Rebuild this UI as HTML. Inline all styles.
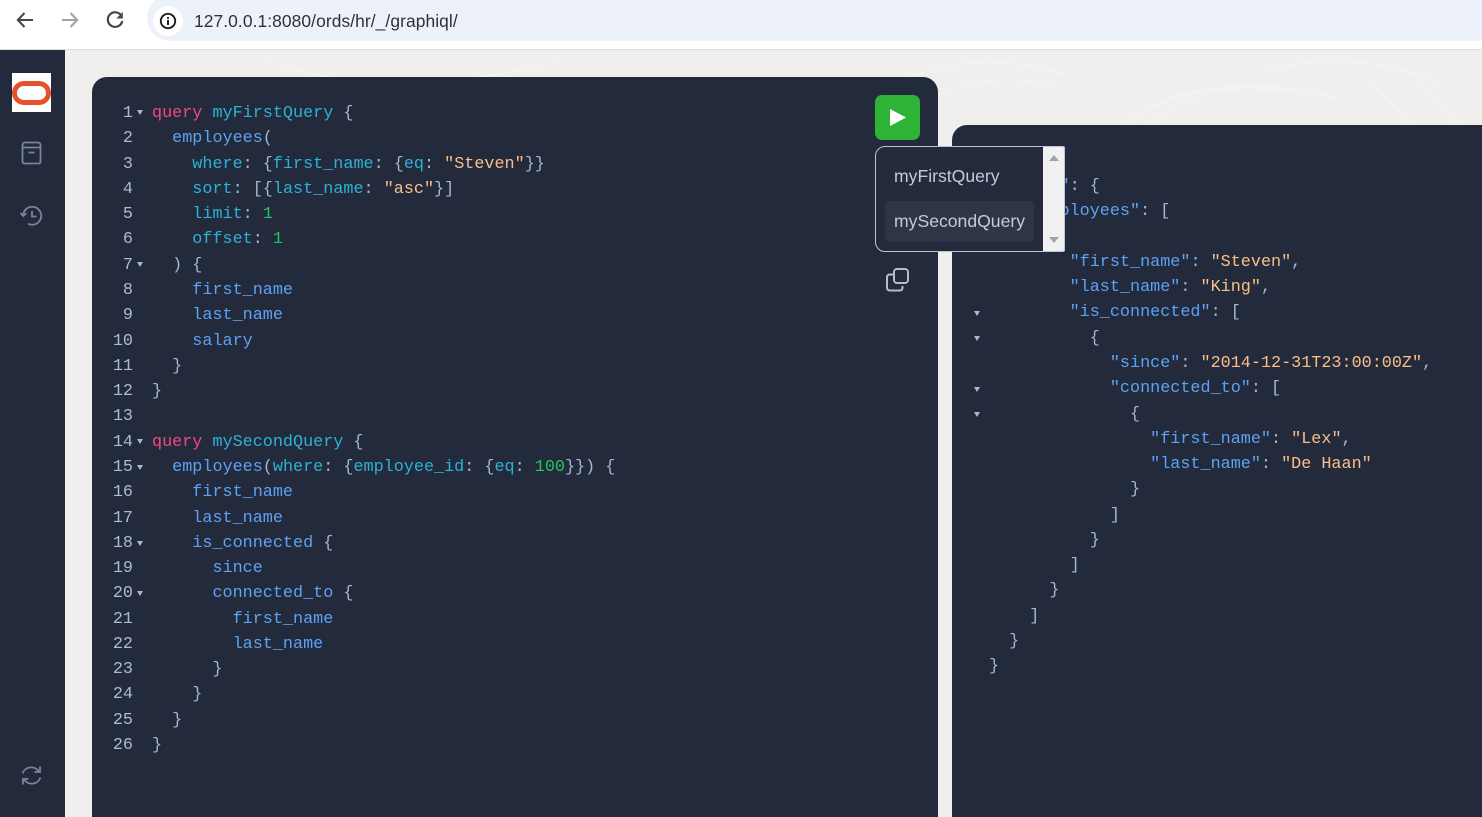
<!DOCTYPE html>
<html><head><meta charset="utf-8"><style>
html,body{margin:0;padding:0;width:1482px;height:817px;overflow:hidden;background:#f0efed;font-family:"Liberation Sans",sans-serif}
.abs,pre,svg{position:absolute}
.bar{left:0;top:0;width:1482px;height:49px;background:#fff;border-bottom:1px solid #e1e1e1}
.pill{left:147px;top:-6px;width:1400px;height:47px;background:#edf2fa;border-radius:24px}
.circ{left:153px;top:6px;width:30px;height:30px;border-radius:50%;background:#fff}
.url{left:194px;top:11px;font-size:17.4px;line-height:20px;color:#2f3134;white-space:nowrap;letter-spacing:.08px}
.side{left:0;top:50px;width:65px;height:767px;background:#222a3c}
.logo{left:12px;top:73px;width:39px;height:39px;background:#fff}
.oval{left:12px;top:81px;width:39px;height:24px;box-sizing:border-box;border:5.500px solid #e5512a;border-radius:12px}
.panel{background:#222a3c}
.p1{left:92px;top:77px;width:846px;height:740px;border-radius:15px 15px 0 0}
.p2{left:952px;top:125px;width:530px;height:692px;border-radius:15px 0 0 0}
pre{margin:0;font-family:"Liberation Mono",monospace;font-size:16.8px;line-height:25.28px;color:#a3b8d6;white-space:pre}
.k{color:#f4487f}.n{color:#2db2d6}.f{color:#5ea2f2}.a{color:#2db2d6}.s{color:#fbbf86}.d{color:#24c45e}
.ln{color:#a8bdd8;text-align:right;width:40px}
.fold{width:0;height:0;border-left:3.5px solid transparent;border-right:3.5px solid transparent;border-top:5px solid #a9b9d3}
.play{left:875px;top:95px;width:45px;height:45px;border-radius:7px;background:#2fb336}
.dd{left:875px;top:146px;width:190px;height:106px;box-sizing:border-box;background:#222a3c;border:1px solid #bcc5d6;border-radius:10px 2px 2px 10px;overflow:hidden}
.sb{left:167px;top:0;width:22px;height:104px;background:#f1f1f1}
.hl{left:9px;top:54px;width:149px;height:41px;border-radius:4px;background:#2e3547}
.it{left:18px;font-size:17.6px;line-height:22px;color:#c0cbdc;white-space:nowrap}
</style></head><body>
<div class="abs bar"></div>
<div class="abs pill"></div>
<div class="abs circ"></div>
<svg style="left:13px;top:8px" width="24" height="24" viewBox="0 0 24 24" fill="none" stroke="#474747" stroke-width="2"><path d="M20 12H5M11.5 5L4.800 12l6.700 7"/></svg>
<svg style="left:58px;top:8px" width="24" height="24" viewBox="0 0 24 24" fill="none" stroke="#a3a3a3" stroke-width="2"><path d="M4 12h15M12.500 5l6.700 7-6.700 7"/></svg>
<svg style="left:103px;top:8px" width="24" height="24" viewBox="0 0 24 24" fill="none" stroke="#474747" stroke-width="2.200"><path d="M18.500 8A7.300 7.300 0 1 0 19.300 13"/><path d="M19.800 4v6.500h-6.500z" fill="#474747" stroke="none"/></svg>
<svg style="left:159px;top:12px" width="18" height="18" viewBox="0 0 18 18" fill="none"><circle cx="9" cy="9" r="7.200" stroke="#1f1f1f" stroke-width="1.900"/><path d="M9 8v5M9 5v1.800" stroke="#1f1f1f" stroke-width="2"/></svg>
<div class="abs url">127.0.0.1:8080/ords/hr/_/graphiql/</div>

<svg style="left:65px;top:50px" width="1417" height="767" fill="none" stroke="#f4f3f1" stroke-width="1.500"><path d="M1040 100c30-50 90-70 170-60M1060 110c30-60 90-80 170-70M1085 60c50-30 130-30 190-10M1200 20c60-15 130-10 180 15M1300 30c40 30 60 60 60 90M1340 20c40 30 60 60 70 100M840 30c40-20 100-25 160-5M860 50c40-20 80-25 130-15M200 10c80 30 180 30 300 0"/></svg>

<div class="abs side"></div>
<div class="abs logo"></div>
<div class="abs oval"></div>
<svg style="left:19px;top:140px" width="25" height="26" viewBox="0 0 25 26" fill="none" stroke="#7a8599" stroke-width="1.800"><path d="M3.500 5.500c0-2 1-3 3-3h12c2 0 3 1 3 3v16c0 1.300-.7 2-2 2h-14c-1.300 0-2-.7-2-2z"/><path d="M3.500 7.500h18M9.500 12.500h6"/></svg>
<svg style="left:19px;top:203px" width="25" height="25" viewBox="0 0 25 25" fill="none" stroke="#7a8599" stroke-width="1.800"><path d="M4.200 12.500A9 9 0 1 1 9 20.700"/><path d="M1.500 10l2.800 3 3-2.800"/><path d="M13 8v5.500h4.500"/></svg>
<svg style="left:19px;top:763px" width="25" height="25" viewBox="0 0 25 25" fill="none" stroke="#7a8599" stroke-width="1.800"><path d="M3.500 10.500A9.300 9.300 0 0 1 20 8.500"/><path d="M21 3.500v5.500h-5.500"/><path d="M21.500 14.500A9.300 9.300 0 0 1 5 16.500"/><path d="M4 21.500V16h5.500"/></svg>

<div class="abs panel p1"></div>
<div class="abs panel p2"></div>

<pre class="ln" style="left:93px;top:101px">1
2
3
4
5
6
7
8
9
10
11
12
13
14
15
16
17
18
19
20
21
22
23
24
25
26</pre>
<div class="abs fold" style="left:137px;top:110px"></div>
<div class="abs fold" style="left:137px;top:262px"></div>
<div class="abs fold" style="left:137px;top:439px"></div>
<div class="abs fold" style="left:137px;top:465px"></div>
<div class="abs fold" style="left:137px;top:541px"></div>
<div class="abs fold" style="left:137px;top:591px"></div>

<pre style="left:152px;top:101px"><span class="k">query</span> <span class="n">myFirstQuery</span> {
  <span class="f">employees</span>(
    <span class="a">where</span>: {<span class="a">first_name</span>: {<span class="a">eq</span>: <span class="s">"Steven"</span>}}
    <span class="a">sort</span>: [{<span class="a">last_name</span>: <span class="s">"asc"</span>}]
    <span class="a">limit</span>: <span class="d">1</span>
    <span class="a">offset</span>: <span class="d">1</span>
  ) {
    <span class="f">first_name</span>
    <span class="f">last_name</span>
    <span class="f">salary</span>
  }
}

<span class="k">query</span> <span class="n">mySecondQuery</span> {
  <span class="f">employees</span>(<span class="a">where</span>: {<span class="a">employee_id</span>: {<span class="a">eq</span>: <span class="d">100</span>}}) {
    <span class="f">first_name</span>
    <span class="f">last_name</span>
    <span class="f">is_connected</span> {
      <span class="f">since</span>
      <span class="f">connected_to</span> {
        <span class="f">first_name</span>
        <span class="f">last_name</span>
      }
    }
  }
}</pre>

<div class="abs fold" style="left:974px;top:311px"></div>
<div class="abs fold" style="left:974px;top:336px"></div>
<div class="abs fold" style="left:974px;top:387px"></div>
<div class="abs fold" style="left:974px;top:412px"></div>

<pre style="left:989px;top:148.700px">{
  <span class="f">"data"</span>: {
    <span class="f">"employees"</span>: [
      {
        <span class="f">"first_name"</span>: <span class="s">"Steven"</span>,
        <span class="f">"last_name"</span>: <span class="s">"King"</span>,
        <span class="f">"is_connected"</span>: [
          {
            <span class="f">"since"</span>: <span class="s">"2014-12-31T23:00:00Z"</span>,
            <span class="f">"connected_to"</span>: [
              {
                <span class="f">"first_name"</span>: <span class="s">"Lex"</span>,
                <span class="f">"last_name"</span>: <span class="s">"De Haan"</span>
              }
            ]
          }
        ]
      }
    ]
  }
}</pre>

<div class="abs play"><svg style="left:14px;top:14px" width="18" height="17" viewBox="0 0 18 17"><path d="M1 0L17 8.500 1 17z" fill="#fff"/></svg></div>
<div class="abs dd">
  <div class="abs sb">
    <svg style="left:6px;top:8px" width="10" height="6"><path d="M5 0l5 6H0z" fill="#a3a3a3"/></svg>
    <svg style="left:6px;top:90px" width="10" height="6"><path d="M0 0h10L5 6z" fill="#a3a3a3"/></svg>
  </div>
  <div class="abs hl"></div>
  <div class="abs it" style="top:18px">myFirstQuery</div>
  <div class="abs it" style="top:63px">mySecondQuery</div>
</div>
<svg style="left:885px;top:267px" width="25" height="26" viewBox="0 0 25 26" fill="none" stroke="#b3bccb" stroke-width="2"><rect x="9" y="2" width="14" height="14" rx="3"/><path d="M9 7.500H5c-2 0-3 1-3 3v10c0 2 1 3 3 3h9.500c2 0 3-1 3-3V19"/></svg>
</body></html>
